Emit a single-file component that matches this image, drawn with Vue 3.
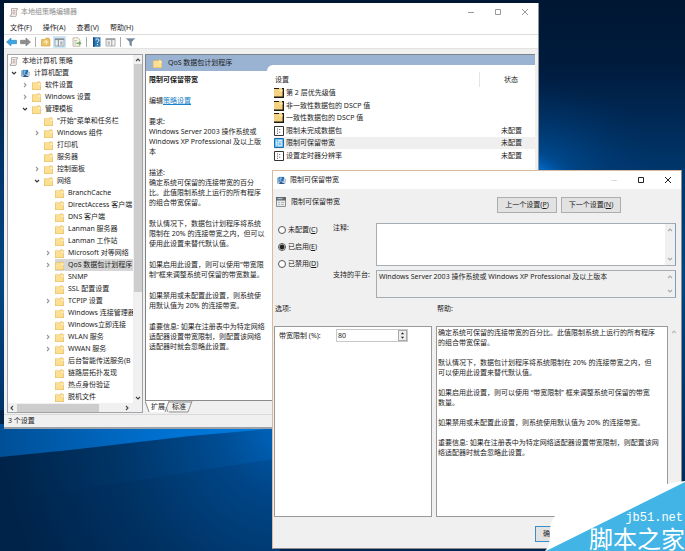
<script setup>
import { ref } from 'vue'

const menus = ['文件(F)', '操作(A)', '查看(V)', '帮助(H)']

const tree = [
  { d: 0, t: '本地计算机 策略', i: 'scroll' },
  { d: 1, t: '计算机配置', i: 'computer', c: 'open' },
  { d: 2, t: '软件设置', c: 'closed' },
  { d: 2, t: 'Windows 设置', c: 'closed' },
  { d: 2, t: '管理模板', c: 'open' },
  { d: 3, t: '"开始"菜单和任务栏' },
  { d: 3, t: 'Windows 组件', c: 'closed' },
  { d: 3, t: '打印机' },
  { d: 3, t: '服务器' },
  { d: 3, t: '控制面板', c: 'closed' },
  { d: 3, t: '网络', c: 'open' },
  { d: 4, t: 'BranchCache' },
  { d: 4, t: 'DirectAccess 客户端' },
  { d: 4, t: 'DNS 客户端' },
  { d: 4, t: 'Lanman 服务器' },
  { d: 4, t: 'Lanman 工作站' },
  { d: 4, t: 'Microsoft 对等网络', c: 'closed' },
  { d: 4, t: 'QoS 数据包计划程序', c: 'closed', sel: true },
  { d: 4, t: 'SNMP' },
  { d: 4, t: 'SSL 配置设置' },
  { d: 4, t: 'TCPIP 设置', c: 'closed' },
  { d: 4, t: 'Windows 连接管理器' },
  { d: 4, t: 'Windows立即连接' },
  { d: 4, t: 'WLAN 服务', c: 'closed' },
  { d: 4, t: 'WWAN 服务', c: 'closed' },
  { d: 4, t: '后台智能传送服务(B' },
  { d: 4, t: '链路层拓扑发现' },
  { d: 4, t: '热点身份验证' },
  { d: 4, t: '脱机文件' }
]
const indent = (d) => (d === 0 ? 1 : 2 + Math.round((d - 1) * 11.4)) + 'px'

const settings = [
  { t: '第 2 层优先级值', i: 'boxfolder', s: '' },
  { t: '非一致性数据包的 DSCP 值', i: 'boxfolder', s: '' },
  { t: '一致性数据包的 DSCP 值', i: 'boxfolder', s: '' },
  { t: '限制未完成数据包', i: 'sheet', s: '未配置' },
  { t: '限制可保留带宽', i: 'sheetsel', s: '未配置', sel: true },
  { t: '设置定时器分辨率', i: 'sheet', s: '未配置' }
]

const summary = [
  '要求:\nWindows Server 2003 操作系统或\nWindows XP Professional 及以上版\n本',
  '描述:\n确定系统可保留的连接带宽的百分\n比。此值限制系统上运行的所有程序\n的组合带宽保留。',
  '默认情况下，数据包计划程序将系统\n限制在 20% 的连接带宽之内，但可以\n使用此设置来替代默认值。',
  '如果启用此设置，则可以使用"带宽限\n制"框来调整系统可保留的带宽数量。',
  '如果禁用或未配置此设置，则系统使\n用默认值为 20% 的连接带宽。',
  '重要信息: 如果在注册表中为特定网络\n适配器设置带宽限制，则配置该网络\n适配器时就会忽略此设置。'
]
const help = [
  '确定系统可保留的连接带宽的百分比。此值限制系统上运行的所有程序\n的组合带宽保留。',
  '默认情况下，数据包计划程序将系统限制在 20% 的连接带宽之内，但\n可以使用此设置来替代默认值。',
  '如果启用此设置，则可以使用 “带宽限制” 框来调整系统可保留的带宽\n数量。',
  '如果禁用或未配置此设置，则系统使用默认值为 20% 的连接带宽。',
  '重要信息: 如果在注册表中为特定网络适配器设置带宽限制，则配置该网\n络适配器时就会忽略此设置。'
]

const states = [
  { v: 'none', t: '未配置', k: 'C' },
  { v: 'on', t: '已启用', k: 'E' },
  { v: 'off', t: '已禁用', k: 'D' }
]
const state = ref('on')
const comment = ref('')
const platform = ref('Windows Server 2003 操作系统或 Windows XP Professional 及以上版本')
const limit = ref('80')
</script>

<template>
  <div class="desktop">
    <svg class="defs" aria-hidden="true">
      <symbol id="folder" viewBox="0 0 9 9">
        <path d="M0 1.5h5.5V.5H8v1h1V9H0z" fill="#e3b75c" />
        <path d="M.5 2H6V1h1.7v1h.8v6.4h-8z" fill="#fbdf92" />
        <path d="M6.5 2.5h2V4h-2z" fill="#fff4cf" />
      </symbol>
      <symbol id="scroll" viewBox="0 0 9 9">
        <path d="M2.5.5h6v1.4H7.4V7a1.4 1.4 0 0 1-1.4 1.5H1.2V7h1.3z" fill="#f3efec" stroke="#aaa29f" stroke-width=".8" />
        <path d="M3.6 2.6h2.6M3.6 4.2h2.6M3.6 5.8h2.6" stroke="#b5857c" stroke-width=".7" />
      </symbol>
      <symbol id="computer" viewBox="0 0 10 9">
        <path d="M0 1h3v7H0z" fill="#9db6c9" />
        <path d="M2 .5h6v5.200H2z" fill="#2b6cab" />
        <path d="M2.800 1.200h3L4 5H2.800z" fill="#6fc0ee" />
        <path d="M4 5.500 9.500 8.500H2z" fill="#27588c" />
        <path d="M7.300 3h2.200v3.500H7.300z" fill="#dce7ee" stroke="#6d8ba3" stroke-width=".5" />
      </symbol>
      <symbol id="boxfolder" viewBox="0 0 10 10">
        <path d="M0 0h10v10H0z" fill="#1d1a12" />
        <path d="M0 1h5V0h3v1h.6v7.600H0z" fill="#f4d27f" />
        <path d="M5.500 2h3v1.400h-3z" fill="#fff0c0" />
      </symbol>
      <symbol id="sheet" viewBox="0 0 10 10">
        <path d="M.5.5h9v9h-9z" fill="#fff" stroke="#333" />
        <path d="M3.500 2.500v1M3.500 4.600v1M3.500 6.800v1M5.200 3.500h1M5.200 6.200h1" stroke="#555" />
      </symbol>
      <symbol id="sheetsel" viewBox="0 0 10 10">
        <path d="M.5.5h9v9h-9z" fill="#6dbdf0" stroke="#1a6aa8" />
        <path d="M2.400 2.500v5M4.200 4h3.200v3.800H4.200zM4 2.500h4" stroke="#e8f6ff" fill="none" stroke-width=".9" />
      </symbol>
      <symbol id="up" viewBox="0 0 8 8"><path d="M2 5 4 3l2 2" fill="none" stroke="currentColor" stroke-width="1.1" /></symbol>
      <symbol id="down" viewBox="0 0 8 8"><path d="M2 3l2 2 2-2" fill="none" stroke="currentColor" stroke-width="1.1" /></symbol>
      <symbol id="left" viewBox="0 0 8 8"><path d="M5 2 3 4l2 2" fill="none" stroke="currentColor" stroke-width="1.1" /></symbol>
      <symbol id="right" viewBox="0 0 8 8"><path d="M3 2l2 2-2 2" fill="none" stroke="currentColor" stroke-width="1.1" /></symbol>
    </svg>

    <svg class="wallpaper" viewBox="0 0 685 551" preserveAspectRatio="none" aria-hidden="true">
      <defs>
        <linearGradient id="base" x1="0" y1="0" x2="0" y2="1">
          <stop offset="0" stop-color="#001733" />
          <stop offset=".12" stop-color="#001b3d" />
          <stop offset=".3" stop-color="#00356a" />
          <stop offset=".5" stop-color="#004583" />
          <stop offset=".8" stop-color="#003263" />
          <stop offset="1" stop-color="#002550" />
        </linearGradient>
        <radialGradient id="glow" cx=".5" cy=".5" r=".5">
          <stop offset="0" stop-color="#0090ff" />
          <stop offset=".4" stop-color="#0070d4" stop-opacity=".75" />
          <stop offset="1" stop-color="#00458a" stop-opacity="0" />
        </radialGradient>
        <radialGradient id="haze" cx=".5" cy=".5" r=".5">
          <stop offset="0" stop-color="#0062b8" stop-opacity=".7" />
          <stop offset="1" stop-color="#00356f" stop-opacity="0" />
        </radialGradient>
        <linearGradient id="beam" x1="0" y1="0" x2="1" y2="0">
          <stop offset="0" stop-color="#004f96" />
          <stop offset=".6" stop-color="#0072d2" />
          <stop offset="1" stop-color="#007ce0" />
        </linearGradient>
        <radialGradient id="floor" gradientUnits="userSpaceOnUse" cx="290" cy="425" r="290">
          <stop offset="0" stop-color="#0068c4" />
          <stop offset=".25" stop-color="#004c92" />
          <stop offset=".6" stop-color="#003567" />
          <stop offset="1" stop-color="#002349" />
        </radialGradient>
      </defs>
      <path d="M0 0h685v551H0z" fill="url(#base)" />
      <ellipse cx="530" cy="170" rx="130" ry="90" fill="url(#haze)" />
      <ellipse cx="530" cy="178" rx="75" ry="32" fill="url(#glow)" transform="rotate(22 530 178)" />
      <path d="M0 410h280v141H0z" fill="url(#floor)" />
      <path d="M0 424h280v4L190 436 70 450 0 457z" fill="url(#beam)" />
      <path d="M0 502 140 480 280 458v93H0z" fill="#002450" opacity=".16" />
    </svg>

    <main class="window editor">
      <header class="titlebar">
        <svg class="ico9"><use href="#scroll" /></svg>
        <h1>本地组策略编辑器</h1>
        <div class="caption faded">
          <button aria-label="最小化"><svg viewBox="0 0 8 8"><path d="M1 4.500h6" /></svg></button>
          <button aria-label="最大化"><svg viewBox="0 0 8 8"><path d="M1.500 1.500h5v5h-5z" /></svg></button>
          <button aria-label="关闭"><svg viewBox="0 0 8 8"><path d="m1 1 6 6M7 1 1 7" /></svg></button>
        </div>
      </header>
      <nav class="menubar">
        <button v-for="m in menus" :key="m">{{ m }}</button>
      </nav>
      <div class="toolbar">
        <button aria-label="后退"><svg viewBox="0 0 11 10"><path d="M.5 5 5 1v2.300h5.500v3.400H5V9z" fill="#3da4e0" stroke="#2585c4" stroke-width=".6" /></svg></button>
        <button aria-label="前进"><svg viewBox="0 0 11 10"><path d="M10.500 5 6 1v2.300H.5v3.400H6V9z" fill="#8e8e8e" stroke="#777" stroke-width=".6" /></svg></button>
        <i></i>
        <button aria-label="上一级"><svg viewBox="0 0 11 10"><path d="M1.500 2.500H5L6 1h3v1.500h1V9h-8.500z" fill="#edc367" stroke="#c79a3b" stroke-width=".6" /><path d="m4 6 2.200-2.600L8 6M6.200 3.600v4" fill="none" stroke="#fff3cd" /></svg></button>
        <button class="on" aria-label="显示树"><svg viewBox="0 0 11 10"><path d="M1 1.500h9V9H1z" fill="#eef3f6" stroke="#8a979f" stroke-width=".8" /><path d="M1 2.600h9M4.300 3v6M6.200 5.200h2.400M6.200 7h2.400" stroke="#7c8a93" /></svg></button>
        <button aria-label="导出列表"><svg viewBox="0 0 11 10"><path d="M2 .8h5L9 3v6.200H2z" fill="#fbf8e9" stroke="#a7a38f" stroke-width=".7" /><path d="M3.200 3.500h3M3.200 5.200h2M3.200 7h2" stroke="#999" stroke-width=".6" /><path d="M5.500 5.400h2.400V4l2.700 2.200L7.900 8.400V7H5.500z" fill="#74aa69" /></svg></button>
        <i></i>
        <button aria-label="帮助"><svg viewBox="0 0 11 10"><path d="M2 .3h7.500v9.400H2z" fill="#2f78b5" /><path d="M2 .3h1.500v9.400H2z" fill="#1c4d7c" /><path d="M4.900 3.300c0-2 3-1.900 3 0 0 1.200-1.500 1.200-1.500 2.500M6.400 7v1.200" fill="none" stroke="#fff" /></svg></button>
        <button aria-label="窗格"><svg viewBox="0 0 11 10"><path d="M1 1.500h9V9H1z" fill="#f7f7f7" stroke="#999" stroke-width=".8" /><path d="M1 2.600h9M6.800 3v6M2.500 5.200H5M2.500 7H5" stroke="#999" /></svg></button>
        <i></i>
        <button aria-label="筛选"><svg viewBox="0 0 11 10"><path d="M.8 1h9.400L6.800 5v4.500L4.500 8V5z" fill="#76879a" /><path d="M2 1.500h7" stroke="#a9c0d4" stroke-width=".8" /></svg></button>
      </div>

      <div class="panes">
        <section class="tree">
          <div class="treebody">
            <ul>
              <li v-for="(n, k) in tree" :key="k" :style="{ paddingLeft: indent(n.d) }">
                <svg v-if="n.d" class="chev" :class="n.c"><use v-if="n.c" :href="n.c === 'open' ? '#down' : '#right'" /></svg>
                <span class="node" :class="{ sel: n.sel }">
                  <svg class="ico9"><use :href="'#' + (n.i || 'folder')" /></svg>{{ n.t }}
                </span>
              </li>
            </ul>
            <div class="vbar">
              <svg><use href="#up" /></svg>
              <b></b>
              <svg><use href="#down" /></svg>
            </div>
          </div>
          <div class="hbar">
            <svg><use href="#left" /></svg>
            <b></b>
            <svg><use href="#right" /></svg>
          </div>
        </section>

        <section class="detail">
          <div class="split">
            <article class="summary">
              <h2><svg class="ico9"><use href="#folder" /></svg>QoS 数据包计划程序</h2>
              <div class="summarybody">
                <h3>限制可保留带宽</h3>
                <p>编辑<a href="#policy">策略设置</a></p>
                <p v-for="p in summary" :key="p">{{ p }}</p>
              </div>
            </article>
            <div class="listwrap">
              <div class="list">
                <table>
                  <thead><tr><th>设置</th><th class="st">状态</th></tr></thead>
                  <tbody>
                    <tr v-for="s in settings" :key="s.t" :class="{ sel: s.sel }">
                      <td><span class="cell"><svg class="ico10"><use :href="'#' + s.i" /></svg>{{ s.t }}</span></td>
                      <td class="st">{{ s.s }}</td>
                    </tr>
                  </tbody>
                </table>
              </div>
            </div>
          </div>
          <div class="tabs">
            <svg viewBox="0 0 48 12" aria-hidden="true">
              <path d="M1 0 5 11H20L24 0z" fill="#fff" />
              <path d="M0 0 4 11M20 11 24 0M23 11 21 6M43 11 47 0M24 11H43M24 1H46" fill="none" stroke="#777" stroke-width=".8" />
            </svg>
            <button>扩展</button><button>标准</button>
          </div>
        </section>
      </div>
      <footer>3 个设置</footer>
    </main>

    <section class="window dialog" role="dialog" aria-label="限制可保留带宽">
      <header class="titlebar">
        <svg class="ico9"><use href="#computer" /></svg>
        <h1>限制可保留带宽</h1>
        <div class="caption">
          <button class="dim" aria-label="最小化"><svg viewBox="0 0 8 8"><path d="M1 4.500h6" /></svg></button>
          <button aria-label="最大化"><svg viewBox="0 0 8 8"><path d="M1.500 1.500h5v5h-5z" /></svg></button>
          <button aria-label="关闭"><svg viewBox="0 0 8 8"><path d="m1 1 6 6M7 1 1 7" /></svg></button>
        </div>
      </header>
      <div class="heading">
        <svg viewBox="0 0 10 10"><path d="M.5.5h9v9h-9z" fill="#e9eaea" stroke="#8a9093" /><path d="M0 0h10v3.500H0z" fill="#5f686e" /><path d="M1.500 1.700h5" stroke="#cfd6da" /><path d="M2 5.500h2M5 5.500h3M2 7.500h2M5 7.500h3" stroke="#b5b9bb" /></svg>
        <span>限制可保留带宽</span>
        <div class="steps">
          <button>上一个设置(<u>P</u>)</button>
          <button>下一个设置(<u>N</u>)</button>
        </div>
      </div>

      <div class="config">
        <div class="radios">
          <label v-for="s in states" :key="s.v">
            <input v-model="state" type="radio" name="state" :value="s.v" /><span>{{ s.t }}(<u>{{ s.k }}</u>)</span>
          </label>
        </div>
        <div class="fields">
          <label for="comment">注释:</label>
          <div class="box tall">
            <textarea id="comment" v-model="comment"></textarea>
            <div class="arrows"><svg><use href="#up" /></svg><svg><use href="#down" /></svg></div>
          </div>
          <label for="platform">支持的平台:</label>
          <div class="box short">
            <textarea id="platform" v-model="platform" readonly></textarea>
            <div class="arrows"><svg><use href="#up" /></svg><svg><use href="#down" /></svg></div>
          </div>
        </div>
      </div>

      <div class="columns">
        <h2>选项:</h2>
        <h2>帮助:</h2>
        <div class="panel options">
          <label for="limit">带宽限制 (%):</label>
          <div class="spin">
            <input id="limit" v-model="limit" type="text" />
            <div class="spinners">
              <button aria-label="增加"><svg viewBox="0 0 8 5"><path d="M2 4h4L4 1.500z" /></svg></button>
              <button aria-label="减少"><svg viewBox="0 0 8 5"><path d="M2 1h4L4 3.500z" /></svg></button>
            </div>
          </div>
        </div>
        <div class="helpwrap">
          <div class="panel help"><p v-for="p in help" :key="p">{{ p }}</p></div>
          <svg class="helparrow"><use href="#up" /></svg>
        </div>
      </div>
      <div class="actions"><button>确定</button></div>
    </section>

    <aside class="mark">
      <svg viewBox="0 0 140 70" preserveAspectRatio="none" aria-hidden="true">
        <path d="M140 0C112 4 60 16 22 28 10 31 5 39 5 51 5 60 4 66 0 70H140z" fill="#fff" />
        <path d="M140 1V70H1z" fill="#42b4e6" />
      </svg>
      <span class="site">jb51.net</span>
      <span class="name">脚本之家</span>
    </aside>
  </div>
</template>

<style>
body { background: #00193d; }
</style>

<style scoped>
* { box-sizing: border-box; }
.desktop {
  position: relative;
  min-height: 100vh;
  overflow: hidden;
  font: 7px/10px "Noto Sans", "Noto Sans CJK SC", sans-serif;
  color: #1c1c1c;
}
.defs { position: absolute; width: 0; height: 0; }
.wallpaper { position: absolute; inset: 0; width: 100%; height: 100%; }
h1, h2, h3, p, ul { margin: 0; padding: 0; font-size: 7px; font-weight: 400; }
ul { list-style: none; }
button, input, textarea { font: inherit; color: inherit; margin: 0; padding: 0; border: 0; background: none; border-radius: 0; outline: 0; }
svg { display: block; flex: none; }
.ico9 { width: 9px; height: 9px; }
.ico10 { width: 10px; height: 10px; }

.window { position: absolute; background: #f0f0f0; display: flex; flex-direction: column; }
.editor { left: 4px; top: 3px; right: 146px; border-right: 1px solid #8f959b; border-bottom: 2px solid #9ba1a6; }
.dialog { left: 272px; top: 170px; right: 3px; bottom: 2px; border: 1px solid #dbb99c; border-right-color: #8d8d8d; border-bottom-color: #8d8d8d; }

.titlebar { display: flex; align-items: center; background: #fff; padding-left: 5px; height: 18px; gap: 3px; }
.editor .titlebar h1 { color: #8d8d8d; }
.caption { margin-left: auto; display: flex; }
.caption button { width: 27px; display: flex; justify-content: center; }
.caption svg { width: 8px; height: 8px; fill: none; stroke: #222; stroke-width: 1; }
.faded svg { stroke: #999; }
.dim svg { stroke: #ddd; }

.menubar { background: #fff; display: flex; gap: 11px; padding: 1px 6px 0; height: 14px; border-bottom: 1px solid #dcdcdc; }
.toolbar { background: #fff; display: flex; align-items: center; height: 14px; padding-left: 1px; border-bottom: 1px solid #e4e4e4; }
.toolbar button { width: 13px; height: 12px; display: flex; align-items: center; justify-content: center; margin-right: 1px; }
.toolbar button.on { background: #cfe6f7; margin-right: 4px; }
.toolbar svg { width: 11px; height: 10px; }
.toolbar i { width: 1px; height: 10px; background: #aaa; margin: 0 3px 0 2px; }

.panes { display: grid; grid-template-columns: 136px minmax(0, 1fr); gap: 2px; padding: 5px 3px 0; }
.tree { border: 1px solid #a0a4a8; background: #fff; display: flex; flex-direction: column; }
.treebody { display: flex; flex: 1; }
.treebody ul { flex: 1; min-width: 0; overflow: hidden; }
.tree li { display: flex; align-items: center; height: 12px; white-space: nowrap; overflow: hidden; }
.chev { width: 8px; height: 8px; margin-right: 3px; color: #999; }
.chev.open { color: #333; }
.node { display: flex; align-items: center; gap: 4px; flex: 1; height: 12px; }
.node.sel { background: #d6d6d6; }
.vbar { width: 9px; background: #f0f0f0; display: flex; flex-direction: column; align-items: center; padding: 1px 0; color: #444; }
.vbar svg, .hbar svg { width: 8px; height: 8px; }
.vbar b { width: 8px; height: 228px; background: #cdcdcd; margin-bottom: auto; }
.hbar { height: 9px; background: #f0f0f0; display: flex; align-items: center; color: #444; padding-right: 11px; }
.hbar b { width: 82px; height: 8px; background: #cdcdcd; margin: 0 auto 0 1px; }

.detail { display: flex; flex-direction: column; min-width: 0; }
.split { flex: 1; display: grid; grid-template-columns: 121px minmax(0, 1fr); border-left: 1px solid #7d848a; border-top: 1px solid #7d848a; border-bottom: 1px solid #8c8c8c; background: #fff; }
.summary h2 { display: flex; align-items: center; gap: 6px; height: 16px; padding-left: 7px; background: #9ab3d2; white-space: nowrap; }
.summarybody { padding: 3px 0 0 3px; display: flex; flex-direction: column; gap: 11px; white-space: pre; }
.summarybody h3 { font-weight: 700; line-height: 11px; }
.summary a { color: #1683c9; text-decoration: underline; }
.listwrap { background: linear-gradient(#9ab3d2 16px, #fff 16px); padding-top: 10px; display: flex; }
.list { flex: 1; background: #fff; border-top-left-radius: 6px; padding: 7px 0 0 7px; }
table { width: 100%; border-collapse: collapse; table-layout: fixed; }
th { font-weight: 400; text-align: left; height: 15px; padding: 0 0 0 1px; }
td { padding: 0; height: 12px; line-height: 10px; white-space: nowrap; }
tbody tr:nth-child(even) td { height: 13px; }
.st { width: 56px; text-align: right; padding-right: 13px; }
th.st { border-left: 1px solid #e4e4e4; padding-right: 17px; }
tr.sel { background: #efefef; }
.cell { display: flex; align-items: center; gap: 2px; }
.tabs { position: relative; height: 12px; display: flex; padding-left: 6px; gap: 7px; }
.tabs svg { position: absolute; left: 0; top: 0; width: 48px; height: 12px; }
.tabs button { position: relative; height: 12px; }
footer { border-top: 1px solid #d9d9d9; margin-top: 1px; height: 13px; line-height: 12px; padding-left: 4px; }

.dialog .titlebar { padding-left: 4px; gap: 4px; }
.heading { display: flex; align-items: flex-start; padding: 8px 60px 0 3px; gap: 5px; }
.heading > svg { width: 10px; height: 10px; }
.steps { margin-left: auto; display: flex; gap: 4px; }
.steps button { width: 60px; height: 16px; border: 1px solid #adadad; background: #e2e2e2; }
.config { display: grid; grid-template-columns: 55px minmax(0, 1fr); padding: 10px 5px 0; }
.radios { display: flex; flex-direction: column; gap: 7px; padding-top: 2px; }
.radios label { display: flex; align-items: center; gap: 2px; }
.radios input { appearance: none; width: 8px; height: 8px; border: 1px solid #555; border-radius: 50%; background: #fff; }
.radios input:checked { background: radial-gradient(circle, #222 0 2px, #fff 3px); }
.fields { display: grid; grid-template-columns: 43px minmax(0, 1fr); row-gap: 4px; }
.box { border: 1px solid #a5acb2; border-right-color: #7b9fb8; display: flex; }
.tall { height: 43px; background: #fff; }
.short { height: 28px; }
textarea { display: block; flex: 1; min-width: 0; resize: none; overflow: hidden; padding: 1px 2px; }
.arrows { width: 10px; background: #f0f0f0; display: flex; flex-direction: column; justify-content: space-between; align-items: center; padding: 2px 0; color: #aaa; }
.arrows svg { width: 8px; height: 8px; }
.columns { flex: 1; display: grid; grid-template-columns: 158px minmax(0, 1fr); grid-template-rows: 22px 1fr; column-gap: 4px; padding: 6px 1px 0; }
.columns h2 { padding-left: 1px; }
.panel { border: 1px solid #999; background: #fff; }
.options { display: flex; align-items: flex-start; padding: 2px 4px; line-height: 13px; }
.options label { flex: 0 0 57px; }
.spin { display: flex; width: 72px; height: 13px; border: 1px solid #c8c8c8; }
.spin input { flex: 1; min-width: 0; padding-left: 1px; }
.spinners { width: 9px; display: flex; flex-direction: column; border: 1px solid #aaa; background: #eee; }
.spinners button { flex: 1; min-height: 0; }
.spinners svg { width: 7px; height: 4px; fill: #222; }
.helpwrap { display: grid; grid-template-columns: minmax(0, 1fr) 12px; }
.help { padding: 1px; display: flex; flex-direction: column; gap: 10px; white-space: pre; }
.helparrow { width: 8px; height: 8px; color: #bbb; margin: 2px 0 0 2px; }
.actions { height: 31px; display: flex; justify-content: flex-end; align-items: flex-start; padding: 9px 108px 0 0; }
.actions button { width: 38px; height: 16px; border: 1px solid #3c8dc5; background: #e2e2e2; text-align: left; padding-left: 7px; line-height: 14px; }

.mark { position: absolute; right: 0; bottom: 0; width: 140px; height: 70px; display: flex; flex-direction: column; align-items: flex-end; justify-content: flex-end; color: #fff; }
.mark svg { position: absolute; inset: 0; width: 100%; height: 100%; }
.mark span { position: relative; white-space: nowrap; }
.site { font: 12px/14px "Liberation Mono", monospace; padding-right: 2px; }
.name { font: 24px/26px "Noto Sans CJK SC", sans-serif; }
</style>
